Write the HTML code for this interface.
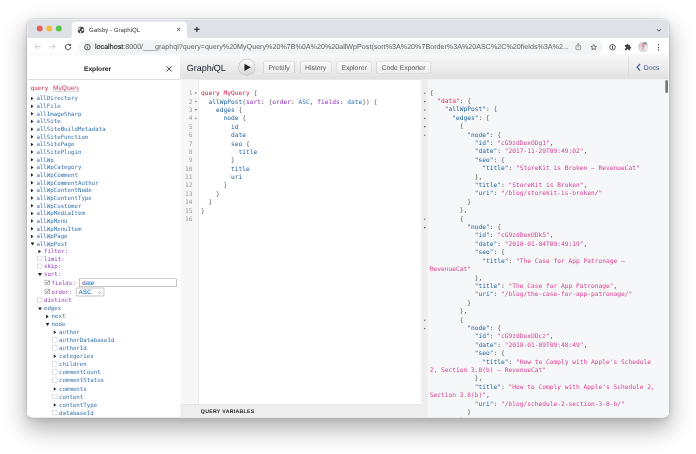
<!DOCTYPE html><html><head><meta charset="utf-8"><title>Gatsby - GraphiQL</title><style>
html,body{margin:0;padding:0;background:#fff;}
body{text-rendering:geometricPrecision;-webkit-font-smoothing:antialiased;width:696px;height:454px;overflow:hidden;position:relative;font-family:"Liberation Sans",sans-serif;}
*{box-sizing:border-box;}
.scaler{position:absolute;left:0;top:0;width:2784px;height:1816px;transform:scale(0.25);transform-origin:0 0;}
.win{position:absolute;left:108px;top:75.6px;width:2568px;height:1594.8px;border-radius:20px;background:#fff;
 box-shadow:0 0 0 2px rgba(0,0,0,.16),0 42px 92px 4px rgba(0,0,0,.31),0 8px 24px rgba(0,0,0,.10);}
.clip{position:absolute;left:0;top:0;right:0;bottom:0;border-radius:20px;overflow:hidden;}
.inner{position:absolute;left:0;top:-2.8px;width:100%;height:1597.6px;}
.rim{position:absolute;left:0;top:0;right:0;bottom:0;border-radius:20px;box-shadow:inset 0 0 0 2.8px rgba(255,255,255,.55);pointer-events:none;}
.abs{position:absolute;}
.tabstrip{left:0;top:0;width:100%;height:80.4px;background:#dee1e6;}
.tl{position:absolute;top:28.8px;width:24px;height:24px;border-radius:50%;}
.tab{position:absolute;left:179.2px;top:14px;width:460.8px;height:66.4px;background:#fff;border-radius:16px 16px 0 0;}
.tabtitle{position:absolute;left:248px;top:32.8px;font-size:24.4px;line-height:28px;color:#3c4043;white-space:nowrap;}
.toolbar{left:0;top:80.4px;width:100%;height:67.6px;background:#fff;border-bottom:2px solid #d9dbde;}
.pill{position:absolute;left:206.4px;top:8.8px;width:2095.6px;height:53.2px;border-radius:24px;background:#f1f3f4;}
.url{position:absolute;left:272px;top:17.6px;font-size:28.6px;line-height:32px;color:#5f6368;white-space:nowrap;}
.url b{font-weight:normal;color:#202124;-webkit-text-stroke:0.48px #202124;}
.mono{font-family:"DejaVu Sans Mono","Liberation Mono",monospace;}
.exp{left:0;top:148px;width:612.8px;height:1449.6px;background:#fff;overflow:hidden;}
.exphead{position:absolute;left:0;top:0;width:100%;height:98px;border-bottom:3.6px solid #d6d6d6;}
.exptitle{position:absolute;left:2px;width:560px;top:36px;text-align:center;font-size:26.8px;line-height:32px;font-weight:bold;color:#141823;}
.row{position:absolute;white-space:nowrap;font-size:23px;line-height:30.64px;height:30.64px;font-family:"DejaVu Sans Mono","Liberation Mono",monospace;color:#1f61a0;}
.arg{color:#8b2bb9;}
.gq{left:613.6px;top:148px;width:1954.4px;height:1449.6px;background:#fff;}
.topbar{position:absolute;left:-1.2px;top:0;width:1955.6px;height:96.8px;background:linear-gradient(#f7f7f7,#e2e2e2);border-bottom:2px solid #d0d0d0;}
.title{position:absolute;left:26.8px;top:30.4px;font-size:36px;line-height:40px;color:#141823;white-space:nowrap;}
.btn{position:absolute;top:25.2px;height:48px;border-radius:6px;background:linear-gradient(#f9f9f9,#ececec);box-shadow:inset 0 0 0 2px rgba(0,0,0,.26),0 2px 0 rgba(255,255,255,.7);
 font-size:27.2px;line-height:48px;text-align:center;color:#555;white-space:nowrap;}
.cm{position:absolute;white-space:pre;font-family:"DejaVu Sans Mono","Liberation Mono",monospace;font-size:24.92px;line-height:33.48px;}
.ln{position:absolute;font-family:"DejaVu Sans Mono","Liberation Mono",monospace;font-size:24.92px;line-height:33.48px;color:#999;text-align:right;width:48px;}
.kw{color:#c41a2e}.def{color:#d81e4c}.prop{color:#1f61a0}.attr{color:#8b2bb9}.pun{color:#555}.enum{color:#2672b8}.str{color:#d64292}.key{color:#1f61a0}
</style></head><body>
<div class="scaler"><div class="win"><div class="clip"><div class="inner">
<div class="abs tabstrip">
<div class="tl" style="left:39.2px;background:#e5645f"></div>
<div class="tl" style="left:77.2px;background:#f3bb46"></div>
<div class="tl" style="left:115.2px;background:#5bc24e"></div>
<div class="tab"></div>
<svg class="abs" style="left:167.2px;top:68.4px" width="12" height="12" viewBox="0 0 3 3"><path d="M3 0V3H0A3 3 0 0 0 3 0z" fill="#fff"/></svg>
<svg class="abs" style="left:640px;top:68.4px" width="12" height="12" viewBox="0 0 3 3"><path d="M0 0V3H3A3 3 0 0 1 0 0z" fill="#fff"/></svg>
<svg class="abs" style="left:201.6px;top:33.6px;border-radius:50%;overflow:hidden" width="28" height="28" viewBox="0 0 24 24"><circle cx="12" cy="12" r="12" fill="#3a3d41"/><path d="M3 7C6 3.500 9 3 11 3.500L10 7L6.500 9L7.500 12.500L5 13.500L2.500 11z" fill="#fff"/><path d="M14 9.500L19.500 8L21.500 12L18 16L14.500 14z" fill="#fff"/><path d="M8.500 15.500L12.500 16.500L13.500 20.500L10.500 22.500L8 19.500z" fill="#fff"/></svg>
<div class="tabtitle">Gatsby - GraphiQL</div>
<svg class="abs" style="left:598px;top:36.4px" width="17.6" height="17.6" viewBox="0 0 10 10"><path d="M1 1L9 9M9 1L1 9" stroke="#3c4043" stroke-width="1.9" fill="none"/></svg>
<svg class="abs" style="left:668.4px;top:33.6px" width="23.2" height="23.2" viewBox="0 0 10 10"><path d="M5 0.5V9.500M0.5 5H9.500" stroke="#303336" stroke-width="2.2" fill="none"/></svg>
<svg class="abs" style="left:2518.4px;top:42px" width="19.2" height="13.2" viewBox="0 0 12 8"><path d="M1 1L6 6L11 1" stroke="#3c4043" stroke-width="2.4" fill="none"/></svg>
</div>
<div class="abs toolbar">
<svg class="abs" style="left:28px;top:20.4px" width="28" height="25.6" viewBox="0 0 16 14"><path d="M8 1L2 7L8 13M2 7H15" stroke="#bdc1c6" stroke-width="1.8" fill="none"/></svg>
<svg class="abs" style="left:88px;top:20.4px" width="28" height="25.6" viewBox="0 0 16 14"><path d="M8 1L14 7L8 13M14 7H1" stroke="#bdc1c6" stroke-width="1.8" fill="none"/></svg>
<svg class="abs" style="left:147.2px;top:17.6px" width="34.4" height="34.4" viewBox="0 0 16 16"><path d="M13 8a5 5 0 1 1-1.6-3.7" stroke="#3c4043" stroke-width="1.8" fill="none"/><path d="M13.6 1.6v4.6H9z" fill="#3c4043"/></svg>
<div class="pill"></div>
<svg class="abs" style="left:228.4px;top:21.6px" width="27.2" height="27.2" viewBox="0 0 16 16"><circle cx="8" cy="8" r="6.5" stroke="#3c4043" stroke-width="2.1" fill="none"/><path d="M8 7v4.4M8 4.2v1.600" stroke="#3c4043" stroke-width="2.1"/></svg>
<div class="url"><b>localhost</b>:8000/___graphql?query=query%20MyQuery%20%7B%0A%20%20allWpPost(sort%3A%20%7Border%3A%20ASC%2C%20fields%3A%2...</div>
<svg class="abs" style="left:2192.8px;top:18.4px" width="24" height="29.6" viewBox="0 0 12 14.8"><path d="M4.2 4.600H3.200A2 2 0 0 0 1.200 6.600V11.600A2 2 0 0 0 3.200 13.600H8.800A2 2 0 0 0 10.800 11.600V6.600A2 2 0 0 0 8.800 4.600H7.800" stroke="#6a6d72" stroke-width="1.5" fill="none"/><path d="M6 9V1.200M4 3L6 1.200L8 3" stroke="#6a6d72" stroke-width="1.4" fill="none"/></svg>
<svg class="abs" style="left:2252.4px;top:21.2px" width="29.6" height="28.8" viewBox="0 0 24 24"><path d="M12 3l2.7 6.2 6.7.6-5.1 4.4 1.6 6.6L12 17.3 6.1 20.8l1.6-6.6L2.6 9.8l6.7-.6z" stroke="#3c4043" stroke-width="2.1" fill="none" stroke-linejoin="round"/></svg>
<svg class="abs" style="left:2327.6px;top:21.6px" width="28" height="28" viewBox="0 0 16 16"><circle cx="8" cy="8" r="6.3" stroke="#3c4043" stroke-width="2" fill="none"/><path d="M8 4v8" stroke="#3c4043" stroke-width="2"/></svg>
<svg class="abs" style="left:2389.2px;top:20.8px" width="29.6" height="29.6" viewBox="0 0 24 24"><path d="M20.5 11H19V7a2 2 0 0 0-2-2h-4V3.5a2.5 2.5 0 0 0-5 0V5H4a2 2 0 0 0-2 2v3.8h1.5a2.7 2.7 0 0 1 0 5.4H2V20a2 2 0 0 0 2 2h3.8v-1.5a2.7 2.7 0 0 1 5.4 0V22H17a2 2 0 0 0 2-2v-4h1.500a2.500 2.500 0 0 0 0-5z" fill="#3c4043"/></svg>
<svg class="abs" style="left:2444.4px;top:12.8px;border-radius:50%;overflow:hidden" width="41.6" height="41.6" viewBox="0 0 52 52"><g><rect width="52" height="52" fill="#d2d3d4"/><ellipse cx="36" cy="9" rx="9" ry="6" fill="#8e8f91"/><ellipse cx="40" cy="34" rx="9" ry="14" fill="#e9e9ea"/><ellipse cx="14" cy="38" rx="10" ry="10" fill="#dededf"/><ellipse cx="26" cy="19" rx="5.5" ry="13" fill="#ee8a96"/><ellipse cx="23" cy="36" rx="2.6" ry="3" fill="#e8707e"/></g></svg>
<svg class="abs" style="left:2522.4px;top:20.8px" width="8" height="29.6" viewBox="0 0 4 16"><circle cx="2" cy="2.4" r="1.5" fill="#3c4043"/><circle cx="2" cy="8" r="1.5" fill="#3c4043"/><circle cx="2" cy="13.6" r="1.5" fill="#3c4043"/></svg>
</div>
<div class="abs exp">
<div class="exphead"><div class="exptitle">Explorer</div>
<svg class="abs" style="left:556px;top:42px" width="24.8" height="24.8" viewBox="0 0 10 10"><path d="M0.8 0.8L9.2 9.2M9.2 0.8L0.8 9.2" stroke="#222" stroke-width="1.35" fill="none"/></svg>
</div>
<div class="row" style="left:15.2px;top:116px;color:#c41a2e">query</div>
<div class="abs" style="left:100.8px;top:112.8px;width:106.4px;height:32.8px;border-bottom:2.4px solid #aaa;font-size:26.4px;line-height:32px;color:#d9335f;overflow:hidden;white-space:nowrap;padding-left:3.2px">MyQuery</div>
<div class="row" style="left:10px;top:157.88px"><svg width="11.2" height="16" viewBox="0 0 33 40" preserveAspectRatio="none" style="position:absolute;left:5.2px;top:7.32px"><path d="M0 0L33 20L0 40z" fill="#2a2a2a"/></svg><span class="" style="position:absolute;left:27.6px;top:0;opacity:.9">allDirectory</span></div>
<div class="row" style="left:10px;top:188.52px"><svg width="11.2" height="16" viewBox="0 0 33 40" preserveAspectRatio="none" style="position:absolute;left:5.2px;top:7.32px"><path d="M0 0L33 20L0 40z" fill="#2a2a2a"/></svg><span class="" style="position:absolute;left:27.6px;top:0;opacity:.9">allFile</span></div>
<div class="row" style="left:10px;top:219.16px"><svg width="11.2" height="16" viewBox="0 0 33 40" preserveAspectRatio="none" style="position:absolute;left:5.2px;top:7.32px"><path d="M0 0L33 20L0 40z" fill="#2a2a2a"/></svg><span class="" style="position:absolute;left:27.6px;top:0;opacity:.9">allImageSharp</span></div>
<div class="row" style="left:10px;top:249.8px"><svg width="11.2" height="16" viewBox="0 0 33 40" preserveAspectRatio="none" style="position:absolute;left:5.2px;top:7.32px"><path d="M0 0L33 20L0 40z" fill="#2a2a2a"/></svg><span class="" style="position:absolute;left:27.6px;top:0;opacity:.9">allSite</span></div>
<div class="row" style="left:10px;top:280.44px"><svg width="11.2" height="16" viewBox="0 0 33 40" preserveAspectRatio="none" style="position:absolute;left:5.2px;top:7.32px"><path d="M0 0L33 20L0 40z" fill="#2a2a2a"/></svg><span class="" style="position:absolute;left:27.6px;top:0;opacity:.9">allSiteBuildMetadata</span></div>
<div class="row" style="left:10px;top:311.08px"><svg width="11.2" height="16" viewBox="0 0 33 40" preserveAspectRatio="none" style="position:absolute;left:5.2px;top:7.32px"><path d="M0 0L33 20L0 40z" fill="#2a2a2a"/></svg><span class="" style="position:absolute;left:27.6px;top:0;opacity:.9">allSiteFunction</span></div>
<div class="row" style="left:10px;top:341.72px"><svg width="11.2" height="16" viewBox="0 0 33 40" preserveAspectRatio="none" style="position:absolute;left:5.2px;top:7.32px"><path d="M0 0L33 20L0 40z" fill="#2a2a2a"/></svg><span class="" style="position:absolute;left:27.6px;top:0;opacity:.9">allSitePage</span></div>
<div class="row" style="left:10px;top:372.36px"><svg width="11.2" height="16" viewBox="0 0 33 40" preserveAspectRatio="none" style="position:absolute;left:5.2px;top:7.32px"><path d="M0 0L33 20L0 40z" fill="#2a2a2a"/></svg><span class="" style="position:absolute;left:27.6px;top:0;opacity:.9">allSitePlugin</span></div>
<div class="row" style="left:10px;top:403px"><svg width="11.2" height="16" viewBox="0 0 33 40" preserveAspectRatio="none" style="position:absolute;left:5.2px;top:7.32px"><path d="M0 0L33 20L0 40z" fill="#2a2a2a"/></svg><span class="" style="position:absolute;left:27.6px;top:0;opacity:.9">allWp</span></div>
<div class="row" style="left:10px;top:433.64px"><svg width="11.2" height="16" viewBox="0 0 33 40" preserveAspectRatio="none" style="position:absolute;left:5.2px;top:7.32px"><path d="M0 0L33 20L0 40z" fill="#2a2a2a"/></svg><span class="" style="position:absolute;left:27.6px;top:0;opacity:.9">allWpCategory</span></div>
<div class="row" style="left:10px;top:464.28px"><svg width="11.2" height="16" viewBox="0 0 33 40" preserveAspectRatio="none" style="position:absolute;left:5.2px;top:7.32px"><path d="M0 0L33 20L0 40z" fill="#2a2a2a"/></svg><span class="" style="position:absolute;left:27.6px;top:0;opacity:.9">allWpComment</span></div>
<div class="row" style="left:10px;top:494.92px"><svg width="11.2" height="16" viewBox="0 0 33 40" preserveAspectRatio="none" style="position:absolute;left:5.2px;top:7.32px"><path d="M0 0L33 20L0 40z" fill="#2a2a2a"/></svg><span class="" style="position:absolute;left:27.6px;top:0;opacity:.9">allWpCommentAuthor</span></div>
<div class="row" style="left:10px;top:525.56px"><svg width="11.2" height="16" viewBox="0 0 33 40" preserveAspectRatio="none" style="position:absolute;left:5.2px;top:7.32px"><path d="M0 0L33 20L0 40z" fill="#2a2a2a"/></svg><span class="" style="position:absolute;left:27.6px;top:0;opacity:.9">allWpContentNode</span></div>
<div class="row" style="left:10px;top:556.2px"><svg width="11.2" height="16" viewBox="0 0 33 40" preserveAspectRatio="none" style="position:absolute;left:5.2px;top:7.32px"><path d="M0 0L33 20L0 40z" fill="#2a2a2a"/></svg><span class="" style="position:absolute;left:27.6px;top:0;opacity:.9">allWpContentType</span></div>
<div class="row" style="left:10px;top:586.84px"><svg width="11.2" height="16" viewBox="0 0 33 40" preserveAspectRatio="none" style="position:absolute;left:5.2px;top:7.32px"><path d="M0 0L33 20L0 40z" fill="#2a2a2a"/></svg><span class="" style="position:absolute;left:27.6px;top:0;opacity:.9">allWpCustomer</span></div>
<div class="row" style="left:10px;top:617.48px"><svg width="11.2" height="16" viewBox="0 0 33 40" preserveAspectRatio="none" style="position:absolute;left:5.2px;top:7.32px"><path d="M0 0L33 20L0 40z" fill="#2a2a2a"/></svg><span class="" style="position:absolute;left:27.6px;top:0;opacity:.9">allWpMediaItem</span></div>
<div class="row" style="left:10px;top:648.12px"><svg width="11.2" height="16" viewBox="0 0 33 40" preserveAspectRatio="none" style="position:absolute;left:5.2px;top:7.32px"><path d="M0 0L33 20L0 40z" fill="#2a2a2a"/></svg><span class="" style="position:absolute;left:27.6px;top:0;opacity:.9">allWpMenu</span></div>
<div class="row" style="left:10px;top:678.76px"><svg width="11.2" height="16" viewBox="0 0 33 40" preserveAspectRatio="none" style="position:absolute;left:5.2px;top:7.32px"><path d="M0 0L33 20L0 40z" fill="#2a2a2a"/></svg><span class="" style="position:absolute;left:27.6px;top:0;opacity:.9">allWpMenuItem</span></div>
<div class="row" style="left:10px;top:709.4px"><svg width="11.2" height="16" viewBox="0 0 33 40" preserveAspectRatio="none" style="position:absolute;left:5.2px;top:7.32px"><path d="M0 0L33 20L0 40z" fill="#2a2a2a"/></svg><span class="" style="position:absolute;left:27.6px;top:0;opacity:.9">allWpPage</span></div>
<div class="row" style="left:10px;top:739.08px"><svg width="16" height="13.2" viewBox="0 0 40 33" style="position:absolute;left:4px;top:9.6px"><path d="M0 0H40L20 33z" fill="#222"/></svg><span class="" style="position:absolute;left:27.6px;top:0;opacity:.9">allWpPost</span></div>
<div class="row" style="left:40.2px;top:769.48px"><svg width="11.2" height="16" viewBox="0 0 33 40" preserveAspectRatio="none" style="position:absolute;left:5.2px;top:7.32px"><path d="M0 0L33 20L0 40z" fill="#2a2a2a"/></svg><span class="arg" style="position:absolute;left:27.6px;top:0;opacity:.9">filter:</span></div>
<div class="row" style="left:40.2px;top:799.88px"><svg width="21.6" height="21.6" viewBox="0 0 54 54" style="position:absolute;left:0px;top:2.8px"><rect x="3" y="3" width="48" height="48" rx="8" fill="#fff" stroke="#b4b4b4" stroke-width="6"/></svg><span class="arg" style="position:absolute;left:27.6px;top:0;opacity:.9">limit:</span></div>
<div class="row" style="left:40.2px;top:830.28px"><svg width="21.6" height="21.6" viewBox="0 0 54 54" style="position:absolute;left:0px;top:2.8px"><rect x="3" y="3" width="48" height="48" rx="8" fill="#fff" stroke="#b4b4b4" stroke-width="6"/></svg><span class="arg" style="position:absolute;left:27.6px;top:0;opacity:.9">skip:</span></div>
<div class="row" style="left:40.2px;top:861.88px"><svg width="16" height="13.2" viewBox="0 0 40 33" style="position:absolute;left:4px;top:9.6px"><path d="M0 0H40L20 33z" fill="#222"/></svg><span class="arg" style="position:absolute;left:27.6px;top:0;opacity:.9">sort:</span></div>
<div class="row" style="left:70.4px;top:895.48px"><svg width="21.6" height="21.6" viewBox="0 0 54 54" style="position:absolute;left:0px;top:2.8px"><rect x="3" y="3" width="48" height="48" rx="8" fill="#fff" stroke="#666" stroke-width="6"/><path d="M12 27L23 38L42 14" stroke="#444" stroke-width="7" fill="none"/></svg><span class="arg" style="position:absolute;left:27.6px;top:0;opacity:.9">fields:</span></div>
<div class="row" style="left:70.4px;top:931.08px"><svg width="21.6" height="21.6" viewBox="0 0 54 54" style="position:absolute;left:0px;top:2.8px"><rect x="3" y="3" width="48" height="48" rx="8" fill="#fff" stroke="#666" stroke-width="6"/><path d="M12 27L23 38L42 14" stroke="#444" stroke-width="7" fill="none"/></svg><span class="arg" style="position:absolute;left:27.6px;top:0;opacity:.9">order:</span></div>
<div class="row" style="left:40.2px;top:965.88px"><svg width="21.6" height="21.6" viewBox="0 0 54 54" style="position:absolute;left:0px;top:2.8px"><rect x="3" y="3" width="48" height="48" rx="8" fill="#fff" stroke="#b4b4b4" stroke-width="6"/></svg><span class="arg" style="position:absolute;left:27.6px;top:0;opacity:.9">distinct</span></div>
<div class="row" style="left:40.2px;top:998.68px"><svg width="16" height="13.2" viewBox="0 0 40 33" style="position:absolute;left:4px;top:9.6px"><path d="M0 0H40L20 33z" fill="#222"/></svg><span class="" style="position:absolute;left:27.6px;top:0;opacity:.9">edges</span></div>
<div class="row" style="left:70.4px;top:1029.88px"><svg width="11.2" height="16" viewBox="0 0 33 40" preserveAspectRatio="none" style="position:absolute;left:5.2px;top:7.32px"><path d="M0 0L33 20L0 40z" fill="#2a2a2a"/></svg><span class="" style="position:absolute;left:27.6px;top:0;opacity:.9">next</span></div>
<div class="row" style="left:70.4px;top:1061.08px"><svg width="16" height="13.2" viewBox="0 0 40 33" style="position:absolute;left:4px;top:9.6px"><path d="M0 0H40L20 33z" fill="#222"/></svg><span class="" style="position:absolute;left:27.6px;top:0;opacity:.9">node</span></div>
<div class="row" style="left:100.6px;top:1092.68px"><svg width="11.2" height="16" viewBox="0 0 33 40" preserveAspectRatio="none" style="position:absolute;left:5.2px;top:7.32px"><path d="M0 0L33 20L0 40z" fill="#2a2a2a"/></svg><span class="" style="position:absolute;left:27.6px;top:0;opacity:.9">author</span></div>
<div class="row" style="left:100.6px;top:1125.08px"><svg width="21.6" height="21.6" viewBox="0 0 54 54" style="position:absolute;left:0px;top:2.8px"><rect x="3" y="3" width="48" height="48" rx="8" fill="#fff" stroke="#b4b4b4" stroke-width="6"/></svg><span class="" style="position:absolute;left:27.6px;top:0;opacity:.9">authorDatabaseId</span></div>
<div class="row" style="left:100.6px;top:1157.08px"><svg width="21.6" height="21.6" viewBox="0 0 54 54" style="position:absolute;left:0px;top:2.8px"><rect x="3" y="3" width="48" height="48" rx="8" fill="#fff" stroke="#b4b4b4" stroke-width="6"/></svg><span class="" style="position:absolute;left:27.6px;top:0;opacity:.9">authorId</span></div>
<div class="row" style="left:100.6px;top:1189.08px"><svg width="11.2" height="16" viewBox="0 0 33 40" preserveAspectRatio="none" style="position:absolute;left:5.2px;top:7.32px"><path d="M0 0L33 20L0 40z" fill="#2a2a2a"/></svg><span class="" style="position:absolute;left:27.6px;top:0;opacity:.9">categories</span></div>
<div class="row" style="left:100.6px;top:1221.08px"><svg width="21.6" height="21.6" viewBox="0 0 54 54" style="position:absolute;left:0px;top:2.8px"><rect x="3" y="3" width="48" height="48" rx="8" fill="#fff" stroke="#b4b4b4" stroke-width="6"/></svg><span class="" style="position:absolute;left:27.6px;top:0;opacity:.9">children</span></div>
<div class="row" style="left:100.6px;top:1253.88px"><svg width="21.6" height="21.6" viewBox="0 0 54 54" style="position:absolute;left:0px;top:2.8px"><rect x="3" y="3" width="48" height="48" rx="8" fill="#fff" stroke="#b4b4b4" stroke-width="6"/></svg><span class="" style="position:absolute;left:27.6px;top:0;opacity:.9">commentCount</span></div>
<div class="row" style="left:100.6px;top:1286.68px"><svg width="21.6" height="21.6" viewBox="0 0 54 54" style="position:absolute;left:0px;top:2.8px"><rect x="3" y="3" width="48" height="48" rx="8" fill="#fff" stroke="#b4b4b4" stroke-width="6"/></svg><span class="" style="position:absolute;left:27.6px;top:0;opacity:.9">commentStatus</span></div>
<div class="row" style="left:100.6px;top:1319.88px"><svg width="11.2" height="16" viewBox="0 0 33 40" preserveAspectRatio="none" style="position:absolute;left:5.2px;top:7.32px"><path d="M0 0L33 20L0 40z" fill="#2a2a2a"/></svg><span class="" style="position:absolute;left:27.6px;top:0;opacity:.9">comments</span></div>
<div class="row" style="left:100.6px;top:1351.88px"><svg width="21.6" height="21.6" viewBox="0 0 54 54" style="position:absolute;left:0px;top:2.8px"><rect x="3" y="3" width="48" height="48" rx="8" fill="#fff" stroke="#b4b4b4" stroke-width="6"/></svg><span class="" style="position:absolute;left:27.6px;top:0;opacity:.9">content</span></div>
<div class="row" style="left:100.6px;top:1384.28px"><svg width="11.2" height="16" viewBox="0 0 33 40" preserveAspectRatio="none" style="position:absolute;left:5.2px;top:7.32px"><path d="M0 0L33 20L0 40z" fill="#2a2a2a"/></svg><span class="" style="position:absolute;left:27.6px;top:0;opacity:.9">contentType</span></div>
<div class="row" style="left:100.6px;top:1416.68px"><svg width="21.6" height="21.6" viewBox="0 0 54 54" style="position:absolute;left:0px;top:2.8px"><rect x="3" y="3" width="48" height="48" rx="8" fill="#fff" stroke="#b4b4b4" stroke-width="6"/></svg><span class="" style="position:absolute;left:27.6px;top:0;opacity:.9">databaseId</span></div>
<div class="row" style="left:100.6px;top:1449.08px"><svg width="21.6" height="21.6" viewBox="0 0 54 54" style="position:absolute;left:0px;top:2.8px"><rect x="3" y="3" width="48" height="48" rx="8" fill="#fff" stroke="#b4b4b4" stroke-width="6"/></svg><span class="" style="position:absolute;left:27.6px;top:0;opacity:.9">date</span></div>
<div class="abs" style="left:208.8px;top:893.2px;width:390.4px;height:33.6px;border:2px solid #8a8a8a;background:#fff;font-size:25.56px;line-height:30.4px;color:#1f61a0;padding-left:8.8px">date</div>
<div class="abs" style="left:196.4px;top:930px;width:112.4px;height:34.4px;border:2px solid #8a8a8a;border-radius:4px;background:#fff;font-size:25.2px;line-height:31.2px;color:#1f61a0;padding-left:8px">ASC<svg width="16.8" height="10.4" viewBox="0 0 42 26" style="position:absolute;right:7.6px;top:12px"><path d="M3 3L21 21L39 3" stroke="#444" stroke-width="5" fill="none"/></svg></div>
</div>
<div class="abs gq">
<div class="topbar">
<div class="title">Graph<i>i</i>QL</div>
<div class="abs" style="left:235.6px;top:17.2px;width:62.8px;height:62.8px;border-radius:50%;background:linear-gradient(#fdfdfd,#d2d3d6);box-shadow:0 0 0 2px rgba(0,0,0,.32),0 2.4px 0 rgba(255,255,255,.9)"><svg width="26.4" height="28.8" viewBox="0 0 10 11" style="position:absolute;left:21.2px;top:16.8px"><path d="M0 0L10 5.5L0 11z" fill="#222"/></svg></div>
<div class="btn" style="left:332.4px;width:127.6px">Prettify</div>
<div class="btn" style="left:479.2px;width:126.4px">History</div>
<div class="btn" style="left:625.6px;width:140.4px">Explorer</div>
<div class="btn" style="left:784.8px;width:217.6px">Code Exporter</div>
<div class="abs" style="left:1792px;top:0;width:164px;height:92px;border-left:2px solid #d0d0d0"></div>
<svg class="abs" style="left:1823.2px;top:32.4px" width="20" height="32" viewBox="0 0 6 10"><path d="M5 0.8L1.2 5L5 9.2" stroke="#3b5998" stroke-width="1.5" fill="none"/></svg>
<div class="abs" style="left:1854.4px;top:33.6px;font-size:27.6px;line-height:32px;color:#3b5998">Docs</div>
</div>
<div class="abs" style="left:0;top:96.8px;width:72.8px;height:1352.8px;background:#f7f7f7;border-right:2px solid #ddd"></div>
<div class="ln" style="left:0px;top:135.24px">1</div>
<svg class="abs" style="left:56.8px;top:148.4px" width="10" height="7.6" viewBox="0 0 6 4"><path d="M0 0H6L3 4z" fill="#666"/></svg>
<div class="cm" style="left:82.4px;top:135.24px"><span class="kw">query</span> <span class="def">MyQuery</span> <span class="pun">{</span></div>
<div class="ln" style="left:0px;top:168.72px">2</div>
<svg class="abs" style="left:56.8px;top:181.88px" width="10" height="7.6" viewBox="0 0 6 4"><path d="M0 0H6L3 4z" fill="#666"/></svg>
<div class="cm" style="left:82.4px;top:168.72px">  <span class="prop">allWpPost</span><span class="pun">(</span><span class="attr">sort</span><span class="pun">: {</span><span class="attr">order</span><span class="pun">: </span><span class="enum">ASC</span><span class="pun">, </span><span class="attr">fields</span><span class="pun">: </span><span class="enum">date</span><span class="pun">}) {</span></div>
<div class="ln" style="left:0px;top:202.2px">3</div>
<svg class="abs" style="left:56.8px;top:215.36px" width="10" height="7.6" viewBox="0 0 6 4"><path d="M0 0H6L3 4z" fill="#666"/></svg>
<div class="cm" style="left:82.4px;top:202.2px">    <span class="prop">edges</span> <span class="pun">{</span></div>
<div class="ln" style="left:0px;top:235.68px">4</div>
<svg class="abs" style="left:56.8px;top:248.84px" width="10" height="7.6" viewBox="0 0 6 4"><path d="M0 0H6L3 4z" fill="#666"/></svg>
<div class="cm" style="left:82.4px;top:235.68px">      <span class="prop">node</span> <span class="pun">{</span></div>
<div class="ln" style="left:0px;top:269.16px">5</div>
<div class="cm" style="left:82.4px;top:269.16px">        <span class="prop">id</span></div>
<div class="ln" style="left:0px;top:302.64px">6</div>
<div class="cm" style="left:82.4px;top:302.64px">        <span class="prop">date</span></div>
<div class="ln" style="left:0px;top:336.12px">7</div>
<div class="cm" style="left:82.4px;top:336.12px">        <span class="prop">seo</span> <span class="pun">{</span></div>
<div class="ln" style="left:0px;top:369.64px">8</div>
<div class="cm" style="left:82.4px;top:369.64px">          <span class="prop">title</span></div>
<div class="ln" style="left:0px;top:403.08px">9</div>
<div class="cm" style="left:82.4px;top:403.08px">        <span class="pun">}</span></div>
<div class="ln" style="left:0px;top:436.56px">10</div>
<div class="cm" style="left:82.4px;top:436.56px">        <span class="prop">title</span></div>
<div class="ln" style="left:0px;top:470.04px">11</div>
<div class="cm" style="left:82.4px;top:470.04px">        <span class="prop">uri</span></div>
<div class="ln" style="left:0px;top:503.52px">12</div>
<div class="cm" style="left:82.4px;top:503.52px">      <span class="pun">}</span></div>
<div class="ln" style="left:0px;top:537px">13</div>
<div class="cm" style="left:82.4px;top:537px">    <span class="pun">}</span></div>
<div class="ln" style="left:0px;top:570.48px">14</div>
<div class="cm" style="left:82.4px;top:570.48px">  <span class="pun">}</span></div>
<div class="ln" style="left:0px;top:604px">15</div>
<div class="cm" style="left:82.4px;top:604px"><span class="pun">}</span></div>
<div class="ln" style="left:0px;top:637.44px">16</div>
<div class="cm" style="left:82.4px;top:637.44px"></div>
<div class="abs" style="left:0;top:1396.8px;width:964px;height:52.8px;background:#eeeeee;border-top:2px solid #d6d6d6;border-bottom:2px solid #d6d6d6"></div>
<div class="abs" style="left:81.6px;top:1414px;font-size:20.8px;line-height:24px;font-weight:bold;color:#222;letter-spacing:1.2px;white-space:nowrap">QUERY VARIABLES</div>
<div class="abs" style="left:964px;top:96.8px;width:990.4px;height:1352.8px;background:#f6f7f8;border-left:2px solid #e0e0e0"></div>
<div class="abs" style="left:964px;top:96.8px;width:25.6px;height:1352.8px;background:#eeeeee"></div>
<svg class="abs" style="left:972.4px;top:149.2px" width="10" height="7.6" viewBox="0 0 6 4"><path d="M0 0H6L3 4z" fill="#666"/></svg>
<div class="cm" style="left:997.2px;top:132.08px"><span class="pun">{</span></div>
<svg class="abs" style="left:972.4px;top:182.84px" width="10" height="7.6" viewBox="0 0 6 4"><path d="M0 0H6L3 4z" fill="#666"/></svg>
<div class="cm" style="left:997.2px;top:165.68px">  <span class="def">"data"</span><span class="pun">: </span><span class="pun">{</span></div>
<svg class="abs" style="left:972.4px;top:216.44px" width="10" height="7.6" viewBox="0 0 6 4"><path d="M0 0H6L3 4z" fill="#666"/></svg>
<div class="cm" style="left:997.2px;top:199.32px">    <span class="key">"allWpPost"</span><span class="pun">: </span><span class="pun">{</span></div>
<svg class="abs" style="left:972.4px;top:250.08px" width="10" height="7.6" viewBox="0 0 6 4"><path d="M0 0H6L3 4z" fill="#666"/></svg>
<div class="cm" style="left:997.2px;top:232.92px">      <span class="key">"edges"</span><span class="pun">: </span><span class="pun">[</span></div>
<svg class="abs" style="left:972.4px;top:283.68px" width="10" height="7.6" viewBox="0 0 6 4"><path d="M0 0H6L3 4z" fill="#666"/></svg>
<div class="cm" style="left:997.2px;top:266.52px">        <span class="pun">{</span></div>
<svg class="abs" style="left:972.4px;top:317.28px" width="10" height="7.6" viewBox="0 0 6 4"><path d="M0 0H6L3 4z" fill="#666"/></svg>
<div class="cm" style="left:997.2px;top:300.16px">          <span class="key">"node"</span><span class="pun">: </span><span class="pun">{</span></div>
<div class="cm" style="left:997.2px;top:333.76px">            <span class="key">"id"</span><span class="pun">: </span><span class="str">"cG9zdDoxODg1"</span><span class="pun">,</span></div>
<div class="cm" style="left:997.2px;top:367.4px">            <span class="key">"date"</span><span class="pun">: </span><span class="str">"2017-11-29T09:49:02"</span><span class="pun">,</span></div>
<div class="cm" style="left:997.2px;top:401px">            <span class="key">"seo"</span><span class="pun">: </span><span class="pun">{</span></div>
<div class="cm" style="left:997.2px;top:434.64px">              <span class="key">"title"</span><span class="pun">: </span><span class="str">"StoreKit is Broken – RevenueCat"</span><span class="pun"></span></div>
<div class="cm" style="left:997.2px;top:468.24px">            <span class="pun">},</span></div>
<div class="cm" style="left:997.2px;top:501.88px">            <span class="key">"title"</span><span class="pun">: </span><span class="str">"StoreKit is Broken"</span><span class="pun">,</span></div>
<div class="cm" style="left:997.2px;top:535.52px">            <span class="key">"uri"</span><span class="pun">: </span><span class="str">"/blog/storekit-is-broken/"</span><span class="pun"></span></div>
<div class="cm" style="left:997.2px;top:569.12px">          <span class="pun">}</span></div>
<div class="cm" style="left:997.2px;top:602.76px">        <span class="pun">},</span></div>
<svg class="abs" style="left:972.4px;top:653.48px" width="10" height="7.6" viewBox="0 0 6 4"><path d="M0 0H6L3 4z" fill="#666"/></svg>
<div class="cm" style="left:997.2px;top:636.36px">        <span class="pun">{</span></div>
<svg class="abs" style="left:972.4px;top:687.12px" width="10" height="7.6" viewBox="0 0 6 4"><path d="M0 0H6L3 4z" fill="#666"/></svg>
<div class="cm" style="left:997.2px;top:670px">          <span class="key">"node"</span><span class="pun">: </span><span class="pun">{</span></div>
<div class="cm" style="left:997.2px;top:703.6px">            <span class="key">"id"</span><span class="pun">: </span><span class="str">"cG9zdDoxODk5"</span><span class="pun">,</span></div>
<div class="cm" style="left:997.2px;top:737.24px">            <span class="key">"date"</span><span class="pun">: </span><span class="str">"2018-01-04T09:49:19"</span><span class="pun">,</span></div>
<div class="cm" style="left:997.2px;top:770.84px">            <span class="key">"seo"</span><span class="pun">: </span><span class="pun">{</span></div>
<div class="cm" style="left:997.2px;top:804.48px">              <span class="key">"title"</span><span class="pun">: </span><span class="str">"The Case for App Patronage –</span></div>
<div class="cm" style="left:997.2px;top:838.08px"><span class="str">RevenueCat"</span></div>
<div class="cm" style="left:997.2px;top:871.72px">            <span class="pun">},</span></div>
<div class="cm" style="left:997.2px;top:905.32px">            <span class="key">"title"</span><span class="pun">: </span><span class="str">"The Case for App Patronage"</span><span class="pun">,</span></div>
<div class="cm" style="left:997.2px;top:938.92px">            <span class="key">"uri"</span><span class="pun">: </span><span class="str">"/blog/the-case-for-app-patronage/"</span><span class="pun"></span></div>
<div class="cm" style="left:997.2px;top:972.56px">          <span class="pun">}</span></div>
<div class="cm" style="left:997.2px;top:1006.16px">        <span class="pun">},</span></div>
<svg class="abs" style="left:972.4px;top:1056.96px" width="10" height="7.6" viewBox="0 0 6 4"><path d="M0 0H6L3 4z" fill="#666"/></svg>
<div class="cm" style="left:997.2px;top:1039.8px">        <span class="pun">{</span></div>
<svg class="abs" style="left:972.4px;top:1090.56px" width="10" height="7.6" viewBox="0 0 6 4"><path d="M0 0H6L3 4z" fill="#666"/></svg>
<div class="cm" style="left:997.2px;top:1073.4px">          <span class="key">"node"</span><span class="pun">: </span><span class="pun">{</span></div>
<div class="cm" style="left:997.2px;top:1107.04px">            <span class="key">"id"</span><span class="pun">: </span><span class="str">"cG9zdDoxODcz"</span><span class="pun">,</span></div>
<div class="cm" style="left:997.2px;top:1140.64px">            <span class="key">"date"</span><span class="pun">: </span><span class="str">"2018-01-09T09:48:49"</span><span class="pun">,</span></div>
<div class="cm" style="left:997.2px;top:1174.28px">            <span class="key">"seo"</span><span class="pun">: </span><span class="pun">{</span></div>
<div class="cm" style="left:997.2px;top:1207.88px">              <span class="key">"title"</span><span class="pun">: </span><span class="str">"How to Comply with Apple's Schedule</span></div>
<div class="cm" style="left:997.2px;top:1241.52px"><span class="str">2, Section 3.8(b) – RevenueCat"</span></div>
<div class="cm" style="left:997.2px;top:1275.12px">            <span class="pun">},</span></div>
<div class="cm" style="left:997.2px;top:1308.76px">            <span class="key">"title"</span><span class="pun">: </span><span class="str">"How to Comply with Apple's Schedule 2,</span></div>
<div class="cm" style="left:997.2px;top:1342.36px"><span class="str">Section 3.8(b)"</span><span class="pun">,</span></div>
<div class="cm" style="left:997.2px;top:1376px">            <span class="key">"uri"</span><span class="pun">: </span><span class="str">"/blog/schedule-2-section-3-8-b/"</span><span class="pun"></span></div>
<div class="cm" style="left:997.2px;top:1409.6px">          <span class="pun">}</span></div>
<div class="cm" style="left:997.2px;top:1443.24px">        <span class="pun">},</span></div>
<div class="abs" style="left:1939.2px;top:99.6px;width:11.6px;height:52px;border-radius:5.8px;background:#7a7a7a"></div>
</div>
</div></div><div class="rim"></div></div></div>
</body></html>
